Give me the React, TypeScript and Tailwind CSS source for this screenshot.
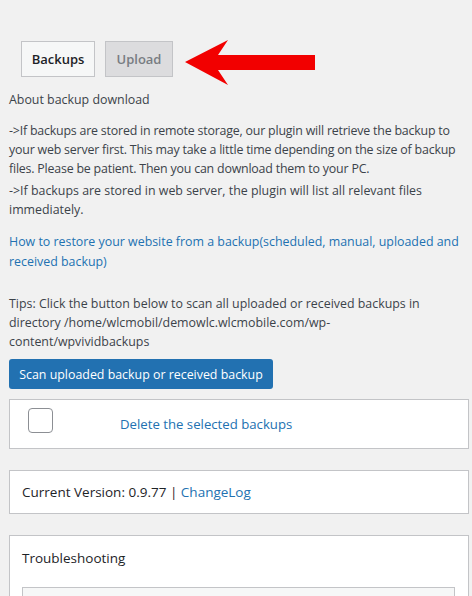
import React from "react";

function Arrow() {
  return (
    <svg width="131" height="47" viewBox="0 0 131 47" className="absolute left-[176px] top-[-1px]">
      <polygon points="0,22 43,0 33,15 130,15 130,30 33,30 43,45" fill="#f20000" />
    </svg>
  );
}

export default function App() {
  return (
    <div className="min-h-screen bg-[#f1f1f1] pl-[9px] pr-[3px] pt-[41px] font-['Open_Sans',sans-serif] text-[12.4px] leading-[19px] text-[#3c434a]">
      <div className="relative flex gap-[10px] pl-[12px]">
        <button className="h-[36px] w-[74px] border border-[#c3c4c7] bg-[#f6f7f7] text-[13px] font-semibold text-[#1d2327]">
          Backups
        </button>
        <button className="h-[36px] w-[68px] border border-[#c3c4c7] bg-[#dcdcde] text-[13px] font-semibold text-[#787c82]">
          Upload
        </button>
        <Arrow />
      </div>

      <p className="mt-[13px]">About backup download</p>

      <p className="mt-[12px] tracking-[-0.2px]">
        -&gt;If backups are stored in remote storage, our plugin will retrieve the backup to your web server first. This may take a little time depending on the size of backup files. Please be patient. Then you can download them to your PC.
      </p>
      <p className="mt-[3px]">
        -&gt;If backups are stored in web server, the plugin will list all relevant files immediately.
      </p>

      <p className="mt-[13px] leading-[20px] text-[#2271b1]">
        How to restore your website from a backup(scheduled, manual, uploaded and received backup)
      </p>

      <p className="mt-[22px]">
        Tips: Click the button below to scan all uploaded or received backups in directory /home/wlcmobil/demowlc.wlcmobile.com/wp-content/wpvividbackups
      </p>

      <button className="mt-[8px] h-[30px] w-[264px] rounded-[3px] bg-[#2271b1] text-[12.4px] text-white">
        Scan uploaded backup or received backup
      </button>

      <div className="mt-[10px] flex h-[50px] items-start border border-[#c3c4c7] bg-white pl-[18px] pt-[8px]">
        <span className="h-[25px] w-[25px] rounded-[4px] border border-[#8c8f94] bg-white" />
        <span className="ml-[67px] mt-[7px] text-[13.2px] text-[#2271b1]">Delete the selected backups</span>
      </div>

      <div className="mt-[21px] flex h-[44px] items-center border border-[#c3c4c7] bg-white pl-[12px] text-[13.5px] text-[#1d2327]">
        <span>
          Current Version: 0.9.77 | <span className="text-[#2271b1]">ChangeLog</span>
        </span>
      </div>

      <div className="mt-[21px] border border-[#c3c4c7] bg-white px-[12px] pt-[12px]">
        <h2 className="text-[13.5px] leading-[20px] text-[#1d2327]">Troubleshooting</h2>
        <div className="mt-[19px] mr-[1px] h-[60px] border border-[#c3c4c7] bg-[#f6f7f7]" />
      </div>
    </div>
  );
}
